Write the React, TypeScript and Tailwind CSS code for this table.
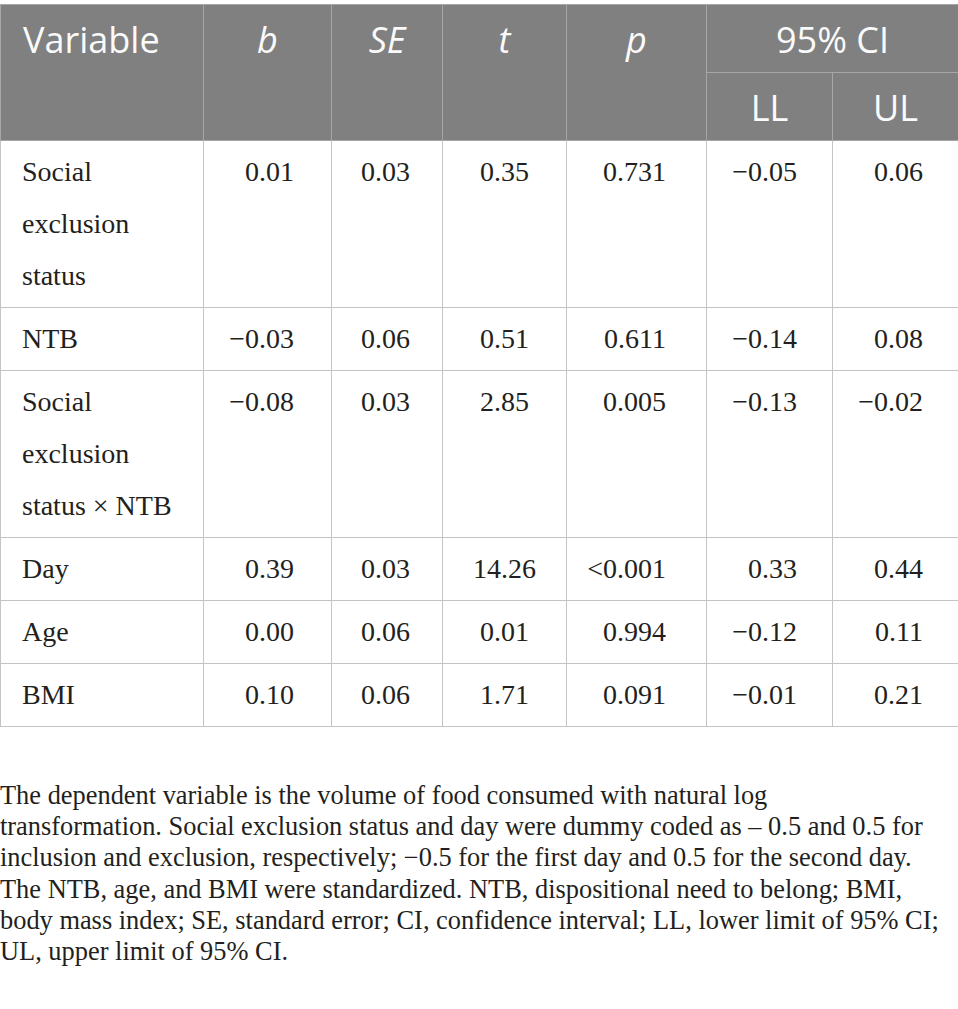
const headFont = { fontFamily: '"Open Sans", "Liberation Sans", sans-serif' };

type Row = {
  label: string;
  b: string;
  se: string;
  t: string;
  p: string;
  ll: string;
  ul: string;
};

const rows: Row[] = [
  { label: "Social exclusion status", b: "0.01", se: "0.03", t: "0.35", p: "0.731", ll: "\u22120.05", ul: "0.06" },
  { label: "NTB", b: "\u22120.03", se: "0.06", t: "0.51", p: "0.611", ll: "\u22120.14", ul: "0.08" },
  { label: "Social exclusion status \u00d7 NTB", b: "\u22120.08", se: "0.03", t: "2.85", p: "0.005", ll: "\u22120.13", ul: "\u22120.02" },
  { label: "Day", b: "0.39", se: "0.03", t: "14.26", p: "<0.001", ll: "0.33", ul: "0.44" },
  { label: "Age", b: "0.00", se: "0.06", t: "0.01", p: "0.994", ll: "\u22120.12", ul: "0.11" },
  { label: "BMI", b: "0.10", se: "0.06", t: "1.71", p: "0.091", ll: "\u22120.01", ul: "0.21" },
];

const th = "border border-[#a6a6a6] align-top pt-[13px] pb-[10px] leading-[44px] font-normal";
const td = "border border-[#c4c4c4] align-top py-[5px] leading-[52px]";

export default function App() {
  return (
    <div
      className="w-[958px] bg-white pt-[4px] text-[#231f20]"
      style={{ fontFamily: '"Liberation Serif", "Times New Roman", serif' }}
    >
      <table className="w-[958px] table-fixed border-collapse text-[28px]">
        <colgroup>
          <col className="w-[203px]" />
          <col className="w-[128px]" />
          <col className="w-[111px]" />
          <col className="w-[124px]" />
          <col className="w-[140px]" />
          <col className="w-[126px]" />
          <col className="w-[126px]" />
        </colgroup>
        <thead className="bg-[#808080] text-[36px] text-[#fafafa]" style={headFont}>
          <tr>
            <th rowSpan={2} className={`${th} text-left pl-[22px]`}>
              Variable
            </th>
            <th rowSpan={2} className={`${th} text-center italic`}>
              b
            </th>
            <th rowSpan={2} className={`${th} text-center italic`}>
              SE
            </th>
            <th rowSpan={2} className={`${th} text-center italic`}>
              t
            </th>
            <th rowSpan={2} className={`${th} text-center italic`}>
              p
            </th>
            <th colSpan={2} className={`${th} text-center`}>
              95% CI
            </th>
          </tr>
          <tr>
            <th className={`${th} text-center`}>LL</th>
            <th className={`${th} text-center`}>UL</th>
          </tr>
        </thead>
        <tbody>
          {rows.map((r) => (
            <tr key={r.label}>
              <td className={`${td} text-left pl-[21px] pr-[16px]`}>{r.label}</td>
              <td className={`${td} text-right pr-[37px]`}>{r.b}</td>
              <td className={`${td} text-right pr-[32px]`}>{r.se}</td>
              <td className={`${td} text-center`}>{r.t}</td>
              <td className={`${td} text-right pr-[40px]`}>{r.p}</td>
              <td className={`${td} text-right pr-[35px]`}>{r.ll}</td>
              <td className={`${td} text-right pr-[35px]`}>{r.ul}</td>
            </tr>
          ))}
        </tbody>
      </table>

      <p className="mt-[53px] whitespace-nowrap text-[26.4px] leading-[31.2px]">
        The dependent variable is the volume of food consumed with natural log
        <br />
        transformation. Social exclusion status and day were dummy coded as {"\u2013"} 0.5 and 0.5 for
        <br />
        inclusion and exclusion, respectively; {"\u2212"}0.5 for the first day and 0.5 for the second day.
        <br />
        The NTB, age, and BMI were standardized. NTB, dispositional need to belong; BMI,
        <br />
        body mass index; SE, standard error; CI, confidence interval; LL, lower limit of 95% CI;
        <br />
        UL, upper limit of 95% CI.
      </p>
    </div>
  );
}
